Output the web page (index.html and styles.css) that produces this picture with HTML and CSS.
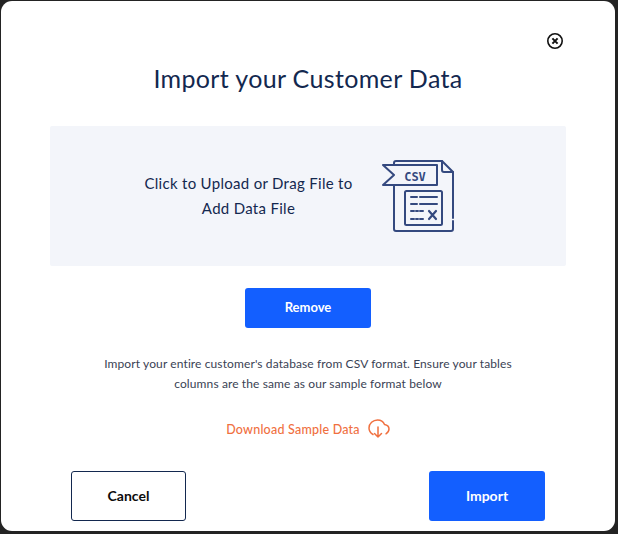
FILE: index.html
```html
<!DOCTYPE html>
<html lang="en">
<head>
<meta charset="utf-8">
<title>Import your Customer Data</title>
<link rel="stylesheet" href="styles.css">
</head>
<body>
<main class="modal">
  <div class="close-row">
    <button class="close" aria-label="Close">
      <svg width="18" height="18" viewBox="0 0 18 18" fill="none" stroke="#111" stroke-width="1.6"><circle cx="9" cy="9" r="7.2"/><path d="M6.4 6.4l5.2 5.2M11.6 6.4l-5.2 5.2" stroke-width="2"/></svg>
    </button>
  </div>
  <h1 class="title">Import your Customer Data</h1>
  <section class="drop">
    <p class="drop-text">Click to Upload or Drag File to<br>Add Data File</p>
    <svg class="csv" width="74" height="74" viewBox="0 0 74 74" fill="none" stroke="#34497f" stroke-width="2" stroke-linejoin="round" stroke-linecap="round">
      <path d="M12 5V3q0-2 2-2H60l11 11V58M71 61V69q0 2-2 2H14q-2 0-2-2V25"/>
      <path d="M60 1V10q0 2 2 2H71"/>
      <path d="M1 5H55V25H1L12 15Z"/>
      <text class="csv-label" x="33" y="20.500">CSV</text>
      <rect x="23" y="31" width="37" height="34" rx="1.500"/>
      <path d="M29 37h6M38 37h17M29 44h6M38 44h17M29 51h3M34 51h2M38 51h3M29 59h3M34 59h2M38 59h3"/>
      <path d="M47 51l7 8M54 51l-7 8" stroke-width="2.200"/>
    </svg>
  </section>
  <div class="remove-row"><button class="btn btn-primary btn-remove">Remove</button></div>
  <p class="note">Import your entire customer's database from CSV format. Ensure your tables<br>columns are the same as our sample format below</p>
  <a class="download" href="#">Download Sample Data
    <svg width="22" height="20" viewBox="0 0 22 20" fill="none" stroke="#f0703f" stroke-width="1.500" stroke-linecap="round" stroke-linejoin="round"><path d="M5 15.500C2.500 14 1 11.500 1 9 1 4.500 5 1 9.500 1c3.500 0 6 2 7 4.500 2.500.5 4.500 2 4.500 4.500 0 2-1 3.500-3 4.800"/><path d="M10 8v10M6.500 14.500l3.500 3.500 3.500-3.500"/></svg>
  </a>
  <div class="actions">
    <button class="btn btn-outline">Cancel</button>
    <button class="btn btn-primary btn-import">Import</button>
  </div>
</main>
</body>
</html>
```
FILE: styles.css
```css
* { box-sizing: border-box; }
html, body { height: 100%; }
body {
  margin: 0;
  padding: 1px 3px 3px 1px;
  background: #232323;
  font-family: Lato, "Open Sans", sans-serif;
  overflow: hidden;
}
.modal {
  height: 530px;
  background: #fff;
  border-radius: 11px;
  padding: 31px 49px 0 49px;
  display: flex;
  flex-direction: column;
}
.close-row { display: flex; justify-content: flex-end; height: 18px; margin-right: 2px; }
.close { padding: 0; border: 0; background: none; width: 18px; height: 18px; display: block; }
.close svg { display: block; }
.title {
  margin: 13px 0 0;
  height: 30px;
  font-size: 25px;
  line-height: 30px;
  font-weight: 400;
  text-align: center;
  color: #13284f;
  letter-spacing: 0.35px;
}
.drop {
  margin-top: 33px;
  height: 140px;
  background: #f3f5fa;
  border-radius: 2px;
  display: flex;
  align-items: center;
  padding-left: 90px;
  gap: 25px;
}
.drop-text {
  margin: 0;
  width: 217px;
  font-size: 15px;
  line-height: 25px;
  letter-spacing: 0.3px;
  text-align: center;
  color: #13284f;
}
.csv { display: block; margin-top: 1px; }
.csv-label { font-family: "DejaVu Sans Mono", monospace; font-size: 12px; font-weight: 700; fill: #34497f; stroke: none; text-anchor: middle; }
.remove-row { display: flex; justify-content: center; margin-top: 22px; }
.btn { font-family: inherit; font-weight: 700; border-radius: 3px; cursor: pointer; padding: 0 0 2px; }
.btn-primary { background: #135fff; color: #fff; border: 0; }
.btn-remove { width: 126px; height: 40px; font-size: 13px; }
.note {
  margin: 26px 0 0;
  font-size: 12px;
  line-height: 20px;
  letter-spacing: 0.11px;
  text-align: center;
  color: #3a4254;
}
.download {
  margin: 25px auto 0;
  display: flex;
  align-items: center;
  gap: 8px;
  font-size: 12.500px;
  letter-spacing: 0.22px;
  font-weight: 500;
  color: #f0703f;
  text-decoration: none;
  height: 20px;
}
.actions {
  margin-top: 32px;
  padding: 0 21px;
  display: flex;
  justify-content: space-between;
}
.btn-outline { width: 115px; height: 50px; background: #fff; border: 1px solid #13284f; color: #0b0b0b; font-size: 14px; }
.btn-import { width: 116px; height: 50px; font-size: 14px; }
```
